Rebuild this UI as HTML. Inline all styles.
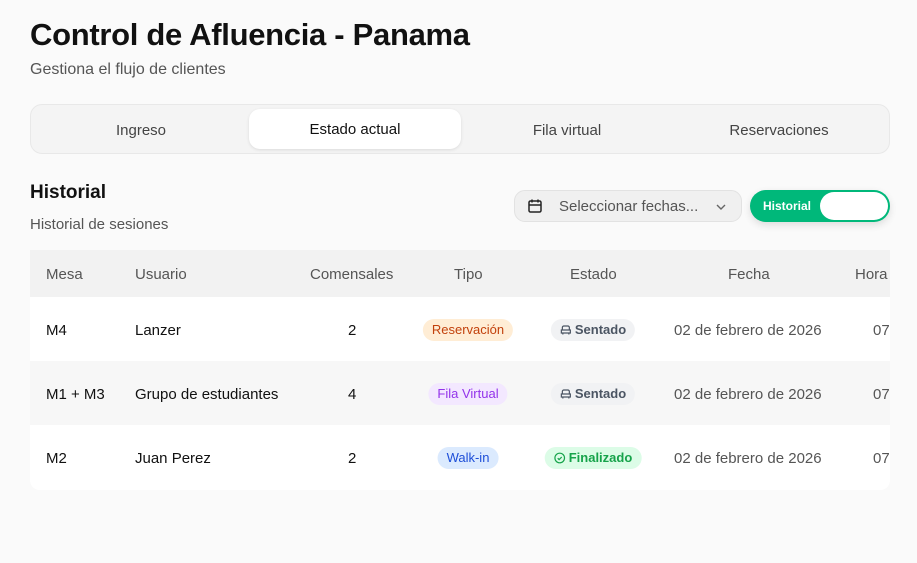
<!DOCTYPE html>
<html><head><meta charset="utf-8"><style>
*{box-sizing:border-box;margin:0;padding:0}
body{width:917px;height:563px;background:#fafafa;font-family:"Liberation Sans",sans-serif;color:#111;position:relative;overflow:hidden}
.abs{position:absolute}
h1{position:absolute;left:30px;top:17px;font-size:31px;font-weight:700;letter-spacing:-0.3px}
.sub{left:30px;top:61px;font-size:16px;color:#555}
.tabs{left:30px;top:104px;width:860px;height:50px;background:#f4f4f4;border:1px solid #e8e8e8;border-radius:12px}
.tab{position:absolute;top:2px;height:48px;line-height:48px;font-size:15px;color:#444;text-align:center;width:212px}
.act{left:218px;top:4px;height:40px;line-height:42px;background:#fff;border-radius:11px;color:#111;box-shadow:0 1px 3px rgba(0,0,0,.1)}
.sel{left:514px;top:190px;width:228px;height:32px;background:#f0f0f0;border:1px solid #e2e2e2;border-radius:11px;font-size:15px;color:#555}
.tog{left:750px;top:190px;width:140px;height:32px;background:#00b87a;border-radius:16px;box-shadow:0 3px 8px rgba(0,0,0,.12)}
.knob{position:absolute;left:70px;top:2px;width:68px;height:28px;background:#fff;border-radius:14px}
.tbl{left:30px;top:250px;width:860px;height:240px;border-radius:0 0 10px 10px;overflow:hidden;background:#fff}
.hd{position:absolute;left:0;top:0;width:860px;height:47px;background:#f2f2f2}
.row{position:absolute;left:0;width:860px;height:64px}
.c{position:absolute;font-size:15px;white-space:nowrap}
.row .c{top:25px}
.hc{color:#555;top:16px}
.pill{position:absolute;height:22px;line-height:22px;border-radius:11px;font-size:13px;padding:0 9px;transform:translateX(-50%);top:22px;white-space:nowrap}
.pill svg{vertical-align:-2px;margin-right:3px}
</style></head><body>
<h1>Control de Afluencia - Panama</h1>
<div class="abs sub">Gestiona el flujo de clientes</div>
<div class="abs tabs">
<div class="tab" style="left:4px">Ingreso</div>
<div class="tab act" style="position:absolute">Estado actual</div>
<div class="tab" style="left:430px">Fila virtual</div>
<div class="tab" style="left:642px">Reservaciones</div>
</div>
<div class="abs" style="left:30px;top:182px;font-size:19px;font-weight:700">Historial</div>
<div class="abs" style="left:30px;top:216px;font-size:15px;color:#555">Historial de sesiones</div>
<div class="abs sel">
<svg class="abs" style="left:12px;top:7px" width="16" height="16" viewBox="0 0 16 16" fill="none" stroke="#222" stroke-width="1.5"><rect x="2" y="3" width="12" height="11" rx="1.5"/><path d="M2 7h12M5 1.5v3M11 1.5v3"/></svg>
<span class="abs" style="left:44px;top:7px">Seleccionar fechas...</span>
<svg class="abs" style="left:200px;top:12px" width="12" height="8" viewBox="0 0 12 8" fill="none" stroke="#666" stroke-width="1.4"><path d="M2 2l4 4 4-4"/></svg>
</div>
<div class="abs tog"><span class="abs" style="left:13px;top:9px;font-size:12px;color:#fff;font-weight:700">Historial</span><div class="knob"></div></div>
<div class="abs tbl">
<div class="hd">
<span class="c hc" style="left:16px">Mesa</span>
<span class="c hc" style="left:105px">Usuario</span>
<span class="c hc" style="left:280px">Comensales</span>
<span class="c hc" style="left:424px">Tipo</span>
<span class="c hc" style="left:540px">Estado</span>
<span class="c hc" style="left:698px">Fecha</span>
<span class="c hc" style="left:825px">Hora</span>
</div>
<div class="row" style="top:47px;background:#fff">
<span class="c" style="left:16px">M4</span><span class="c" style="left:105px">Lanzer</span><span class="c" style="left:318px">2</span>
<span class="pill" style="left:438px;background:#ffedd5;color:#c2410c">Reservación</span>
<span class="pill" style="left:563px;background:#f1f2f4;color:#4b5563;font-weight:700"><svg width="12" height="12" viewBox="0 0 12 12" fill="none" stroke="#4b5563" stroke-width="1.2"><path d="M2.5 6V3.5a1.5 1.5 0 0 1 1.5-1.5h4a1.5 1.5 0 0 1 1.5 1.5V6M1.5 6h9v3h-9zM3 9v1.5M9 9v1.5"/></svg>Sentado</span>
<span class="c" style="left:644px;color:#555">02 de febrero de 2026</span><span class="c" style="left:843px;color:#555">07</span>
</div>
<div class="row" style="top:111px;background:#f7f7f7">
<span class="c" style="left:16px">M1 + M3</span><span class="c" style="left:105px">Grupo de estudiantes</span><span class="c" style="left:318px">4</span>
<span class="pill" style="left:438px;background:#f3e8ff;color:#9333ea">Fila Virtual</span>
<span class="pill" style="left:563px;background:#f1f2f4;color:#4b5563;font-weight:700"><svg width="12" height="12" viewBox="0 0 12 12" fill="none" stroke="#4b5563" stroke-width="1.2"><path d="M2.5 6V3.5a1.5 1.5 0 0 1 1.5-1.5h4a1.5 1.5 0 0 1 1.5 1.5V6M1.5 6h9v3h-9zM3 9v1.5M9 9v1.5"/></svg>Sentado</span>
<span class="c" style="left:644px;color:#555">02 de febrero de 2026</span><span class="c" style="left:843px;color:#555">07</span>
</div>
<div class="row" style="top:175px;background:#fff">
<span class="c" style="left:16px">M2</span><span class="c" style="left:105px">Juan Perez</span><span class="c" style="left:318px">2</span>
<span class="pill" style="left:438px;background:#dbeafe;color:#1d4ed8">Walk-in</span>
<span class="pill" style="left:563px;background:#dcfce7;color:#16a34a;font-weight:700"><svg width="12" height="12" viewBox="0 0 12 12" fill="none" stroke="#16a34a" stroke-width="1.2"><circle cx="6" cy="6" r="4.8"/><path d="M4 6.2l1.4 1.4L8 5"/></svg>Finalizado</span>
<span class="c" style="left:644px;color:#555">02 de febrero de 2026</span><span class="c" style="left:843px;color:#555">07</span>
</div>
</div>
</body></html>
